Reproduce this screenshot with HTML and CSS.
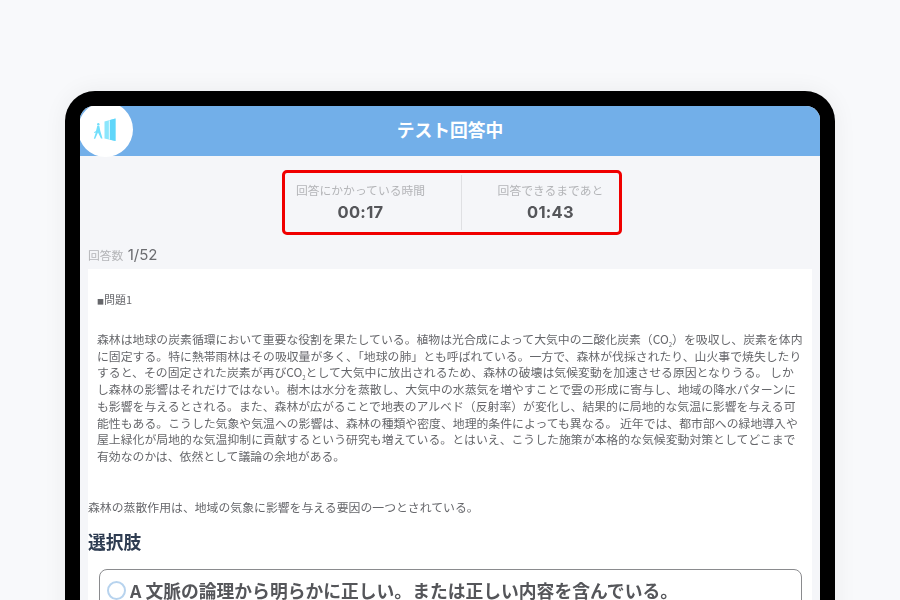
FILE: index.html
```html
<!DOCTYPE html>
<html lang="ja">
<head>
<meta charset="utf-8">
<title>テスト回答中</title>
<link rel="stylesheet" href="styles.css">
</head>
<body>
<div class="tablet">
  <div class="screen">
    <header class="topbar">
      <div class="logo">
        <svg width="26" height="26" viewBox="0 0 26 26">
          <path fill="#8be6fc" d="M11.500 4.500 L22.500 1.500 V24 L11.500 21.500 Z"/>
          <path fill="#5fd6fa" d="M17 3 L22.500 1.500 V24 L17 22.750 Z"/>
          <path fill="#d4f6fe" d="M15.800 3.500 h1.200 v19 h-1.200 Z"/>
          <circle cx="5.300" cy="7.200" r="1.200" fill="#72dffb"/>
          <path fill="#72dffb" d="M4.300 8.800 h2 l1 5.200 l2.200 7.500 h-1.500 l-3-6 l-2.800 6.200 h-1.400 l2-6.200 l-1.400 .6 l-.4-.9 l2-1.200 Z"/>
        </svg>
      </div>
      <h1 class="title">テスト回答中</h1>
    </header>
    <section class="timers">
      <div class="timer-box">
        <div class="timer timer-left">
          <span class="timer-label">回答にかかっている時間</span>
          <span class="timer-value">00:17</span>
        </div>
        <div class="timer timer-right">
          <span class="timer-label">回答できるまであと</span>
          <span class="timer-value">01:43</span>
        </div>
      </div>
    </section>
    <div class="count"><span class="count-label">回答数</span> 1/52</div>
    <main class="card">
      <div class="passage">
        <p class="qno"><span class="qmark">■</span>問題1</p>
        <p class="body-text">森林は地球の炭素循環において重要な役割を果たしている。植物は光合成によって大気中の二酸化炭素（CO<sub>2</sub>）を吸収し、炭素を体内に固定する。特に熱帯雨林はその吸収量が多く、「地球の肺」とも呼ばれている。一方で、森林が伐採されたり、山火事で焼失したりすると、その固定された炭素が再びCO<sub>2</sub>として大気中に放出されるため、森林の破壊は気候変動を加速させる原因となりうる。 しかし森林の影響はそれだけではない。樹木は水分を蒸散し、大気中の水蒸気を増やすことで雲の形成に寄与し、地域の降水パターンにも影響を与えるとされる。また、森林が広がることで地表のアルベド（反射率）が変化し、結果的に局地的な気温に影響を与える可能性もある。こうした気象や気温への影響は、森林の種類や密度、地理的条件によっても異なる。 近年では、都市部への緑地導入や屋上緑化が局地的な気温抑制に貢献するという研究も増えている。とはいえ、こうした施策が本格的な気候変動対策としてどこまで有効なのかは、依然として議論の余地がある。</p>
      </div>
      <p class="statement">森林の蒸散作用は、地域の気象に影響を与える要因の一つとされている。</p>
      <h2 class="choices-title">選択肢</h2>
      <div class="choice">
        <span class="radio"></span>
        <span class="choice-text">A 文脈の論理から明らかに正しい。または正しい内容を含んでいる。</span>
      </div>
    </main>
  </div>
</div>
</body>
</html>
```
FILE: styles.css
```css
* { box-sizing: border-box; }
html, body { margin: 0; height: 600px; overflow: hidden; }
body {
  background: #f8f9fb;
  font-family: "Noto Sans CJK JP", "Noto Sans", sans-serif;
  padding: 91px 65px 0;
}
.tablet {
  height: 600px;
  background: #000;
  border-radius: 30px 30px 0 0;
  padding: 15px 15px 0;
  box-shadow: 0 0 24px rgba(0, 0, 0, 0.06);
}
.screen {
  height: 100%;
  background: #f5f6f9;
  border-radius: 14px 14px 0 0;
  overflow: hidden;
  filter: blur(0.3px);
}
.topbar {
  height: 50px;
  background: #72afe9;
  display: flex;
  align-items: center;
  justify-content: center;
  position: relative;
  padding-bottom: 3px;
}
.logo {
  position: absolute;
  left: -2px;
  top: -4px;
  width: 55px;
  height: 55px;
  border-radius: 50%;
  background: #fff;
  display: flex;
  align-items: center;
  justify-content: center;
}
.title {
  margin: 0;
  color: #fff;
  font-size: 17.800px;
  font-weight: 700;
  line-height: 1;
}
.timers {
  display: flex;
  justify-content: center;
  padding: 14px 0 0 4px;
}
.timer-box {
  width: 340px;
  height: 65px;
  border: 3px solid #f00000;
  border-radius: 5px;
  display: flex;
  padding: 2px 0;
}
.timer {
  display: flex;
  flex-direction: column;
  align-items: center;
  padding-top: 6px;
}
.timer-left {
  width: 177px;
  padding-right: 25px;
  border-right: 1px solid #dfe0e3;
}
.timer-right {
  flex: 1;
  padding-left: 20px;
}
.timer-label {
  font-size: 11.800px;
  line-height: 17px;
  color: #b4b5b8;
}
.timer-value {
  margin-top: 3px;
  font-size: 16.500px;
  line-height: 22px;
  font-weight: 700;
  color: #55565a;
  font-family: "Inter", "Noto Sans", sans-serif;
  letter-spacing: 0.3px;
}
.count {
  margin: 9px 0 0 8px;
  height: 25px;
  font-family: "Inter", "Noto Sans CJK JP", sans-serif;
  font-size: 15px;
  line-height: 22px;
  color: #6b6c70;
}
.count-label {
  font-family: "Noto Sans CJK JP", sans-serif;
  font-size: 11.800px;
  color: #b4b5b8;
}
.card {
  margin: 0 8px;
  background: #fff;
  height: 400px;
}
.passage { padding: 22px 9px 0; }
.qno {
  margin: 0 0 21px;
  font-size: 11px;
  line-height: 17px;
  color: #66676b;
}
.qmark {
  font-size: 7px;
  margin-right: 0;
}
.body-text {
  margin: 0;
  font-size: 11.870px;
  line-height: 16.700px;
  color: #66676b;
}
.body-text sub {
  font-size: 6px;
  line-height: 0;
}
.statement {
  margin: 33px 0 0;
  font-size: 11.870px;
  line-height: 17px;
  color: #66676b;
}
.choices-title {
  margin: 14px 0 0;
  font-size: 17.800px;
  line-height: 24px;
  font-weight: 700;
  color: #2f3d52;
}
.choice {
  margin: 16px 10px 0 11px;
  height: 80px;
  border: 1px solid #8a8b8e;
  border-radius: 8px;
  padding: 8px 7px;
  display: flex;
  align-items: flex-start;
  gap: 4px;
}
.radio {
  width: 19px;
  height: 19px;
  margin-top: 3px;
  border: 2.500px solid #b7d3ee;
  border-radius: 50%;
  background: #fff;
  flex: none;
}
.choice-text {
  font-size: 17.800px;
  line-height: 24px;
  font-weight: 700;
  color: #55565a;
}
```
